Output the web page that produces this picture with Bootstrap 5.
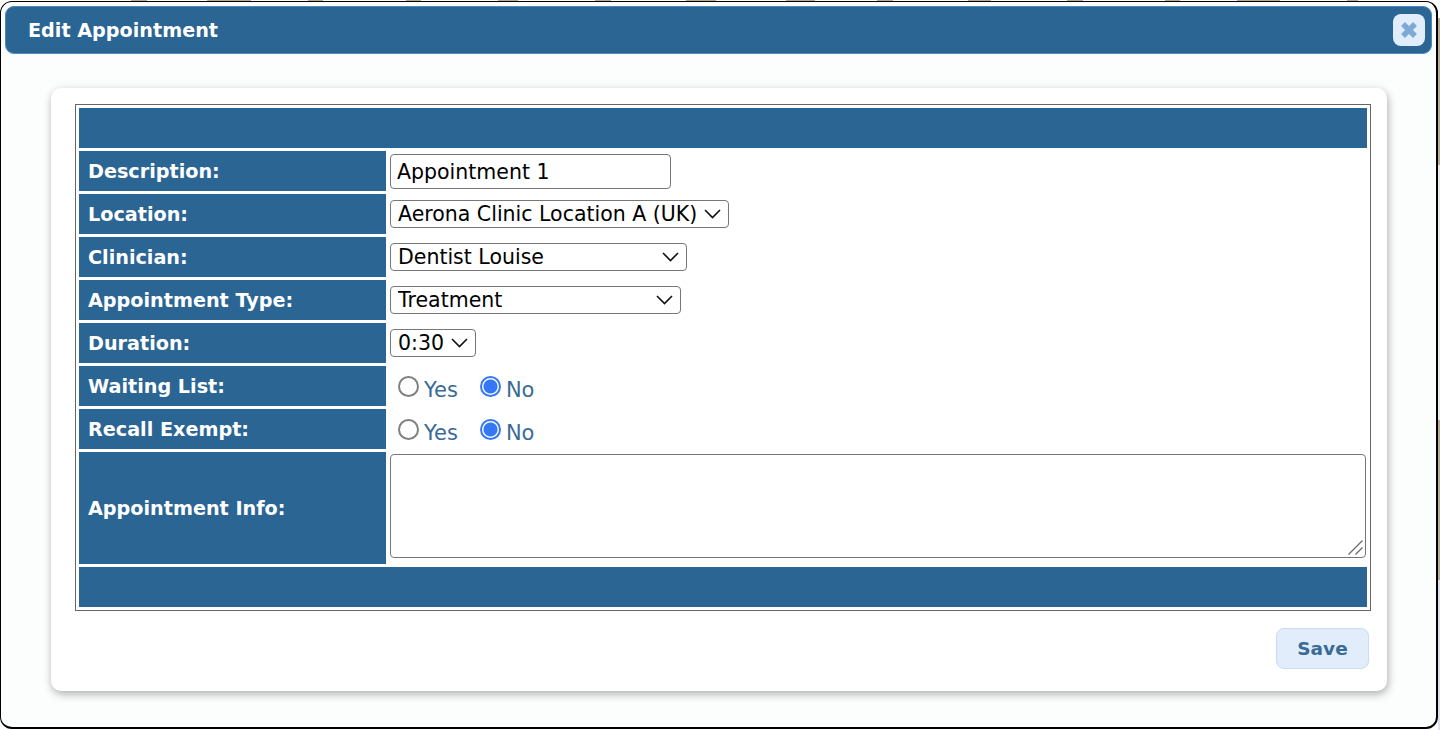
<!DOCTYPE html>
<html lang="en"><head><meta charset="utf-8"><title>Edit Appointment</title>
<link href="https://cdn.jsdelivr.net/npm/bootstrap@5.3.0/dist/css/bootstrap.min.css" rel="stylesheet">
<style>
html,body{height:730px;overflow:hidden}
body{font-family:"DejaVu Sans",sans-serif;font-size:19px;padding:1px 2px 0 0;background-color:#fff;background-repeat:no-repeat;
background-image:
linear-gradient(90deg,transparent 131px,#b8ac95 131px 147px,transparent 147px 207px,#b8ac95 207px 251px,transparent 251px 308px,#b8ac95 308px 323px,transparent 323px 406px,#b8ac95 406px 421px,transparent 421px 498px,#b8ac95 498px 518px,transparent 518px 595px,#b8ac95 595px 611px,transparent 611px 686px,#b8ac95 686px 716px,transparent 716px 786px,#b8ac95 786px 815px,transparent 815px 877px,#b8ac95 877px 893px,transparent 893px 968px,#b8ac95 968px 991px,transparent 991px 1067px,#b8ac95 1067px 1083px,transparent 1083px 1165px,#b8ac95 1165px 1180px,transparent 1180px 1237px,#b8ac95 1237px 1280px,transparent 1280px 1347px,#b8ac95 1347px 1358px,transparent 1358px),
linear-gradient(180deg,#fff 0 18px,#b8ac95 18px 165px,#e9e9ec 165px 420px,#b8ac95 420px 580px,#dcdfee 580px);
background-size:1440px 1px,2px 730px;background-position:0 0,right top}
.app-window{height:728px;border:2px solid #000;border-left-width:1px;border-top-width:1px;border-radius:12px;background:#fcfdfd;padding:4px 4px 0 4px;}
.app-head{height:48px;background:#2b6593;border:1px solid #4d89bf;border-radius:9px;color:#fff;font-weight:700;font-size:19.2px;padding-left:22px;padding-right:6px}
.app-title{padding-top:2px}
.app-close{width:32px;height:32px;border:0;border-radius:8px;background:#e1edfb;padding:0;margin-top:-1px}
.app-panel{margin:34px 0 0 46px;width:1336px;height:603px;background:#fff;border:0;border-radius:10px;box-shadow:1px 3px 8px rgba(0,0,0,.32);padding:16px 16px 0 24px}
.app-table{width:1296px;border-collapse:separate;border-spacing:3px;border:1px solid #666;}
.app-table td{height:40px;padding:0 1px}
.app-table td.lbl{width:307px;background:#2b6593;color:#fff;font-weight:700;padding:2px 9px 0;font-size:19.2px}
.app-table td.bar{background:#2b6593}
.app-in{display:block;height:35px;border:1px solid #777;border-radius:4px;background:#fff;color:#000;font-size:20.5px;padding:2px 6px 0;width:281px;outline:0}
.app-sel{display:block;height:28px;border:1px solid #777;border-radius:4px;color:#000;font-size:20.5px;line-height:26px;padding:0 0 0 7px;background-position:right 7px center;background-size:17px 10px;box-shadow:none;
background-image:url("data:image/svg+xml,%3Csvg xmlns='http://www.w3.org/2000/svg' viewBox='0 0 17 10'%3E%3Cpath d='M1 1 8.5 8.5 16 1' fill='none' stroke='%23111' stroke-width='1.6'/%3E%3C/svg%3E")}
.app-opt{height:40px;padding:10px 0 0 8px;gap:22px}
.app-radio{display:inline-flex;align-items:center;gap:5px;color:#3a6a96;margin:0;font-size:21px}
.app-radio input{appearance:none;width:21px;height:21px;margin:-9px 0 0 0;border:2px solid #808080;border-radius:50%;background:#fff;flex:none}
.app-radio input:checked{border-color:#3478f6;background:radial-gradient(circle,#3478f6 0 6.5px,#fff 7.5px)}
.app-area{display:block;width:976px;height:104px;margin-bottom:4px;border:1px solid #777;border-radius:4px;outline:0;resize:none;
background:#fff no-repeat right 2px bottom 2px/15px 15px url("data:image/svg+xml,%3Csvg xmlns='http://www.w3.org/2000/svg' viewBox='0 0 15 15'%3E%3Cpath d='M0.5 14.5 14.5 0.5M7.5 14.5 14.5 7.5' fill='none' stroke='%23666' stroke-width='1.2'/%3E%3C/svg%3E")}
.app-save{width:93px;height:41px;margin:17px 2px 0 0;background:#e1edfb;border:1px solid #c9dcf0;border-radius:8px;color:#3a6a96;font-weight:700;font-size:18.5px;padding:0;display:block}
</style></head><body>
<div class="app-window">
<div class="app-head d-flex align-items-center justify-content-between"><span class="app-title">Edit Appointment</span>
<button class="app-close d-flex align-items-center justify-content-center" aria-label="Close"><svg width="18" height="18" viewBox="0 0 18 18"><path d="M3 3 15 15M15 3 3 15" stroke="#7da9d6" stroke-width="5.5"/></svg></button></div>
<div class="card app-panel">
<table class="app-table"><tbody>
<tr><td colspan="2" class="bar"></td></tr>
<tr><td class="lbl">Description:</td><td><input class="app-in" value="Appointment 1"></td></tr>
<tr><td class="lbl">Location:</td><td><select class="form-select app-sel" style="width:339px"><option>Aerona Clinic Location A (UK)</option></select></td></tr>
<tr><td class="lbl">Clinician:</td><td><select class="form-select app-sel" style="width:297px"><option>Dentist Louise</option></select></td></tr>
<tr><td class="lbl">Appointment Type:</td><td><select class="form-select app-sel" style="width:291px"><option>Treatment</option></select></td></tr>
<tr><td class="lbl">Duration:</td><td><select class="form-select app-sel" style="width:86px"><option>0:30</option></select></td></tr>
<tr><td class="lbl">Waiting List:</td><td><div class="d-flex align-items-center app-opt"><label class="app-radio"><input type="radio" name="w">Yes</label><label class="app-radio"><input type="radio" name="w" checked>No</label></div></td></tr>
<tr><td class="lbl">Recall Exempt:</td><td><div class="d-flex align-items-center app-opt"><label class="app-radio"><input type="radio" name="r">Yes</label><label class="app-radio"><input type="radio" name="r" checked>No</label></div></td></tr>
<tr><td class="lbl" style="height:112px">Appointment Info:</td><td><textarea class="app-area"></textarea></td></tr>
<tr><td colspan="2" class="bar"></td></tr>
</tbody></table>
<div class="d-flex justify-content-end"><button class="app-save">Save</button></div>
</div>
</div>
<script src="https://cdn.jsdelivr.net/npm/bootstrap@5.3.0/dist/js/bootstrap.bundle.min.js"></script>
</body></html>
